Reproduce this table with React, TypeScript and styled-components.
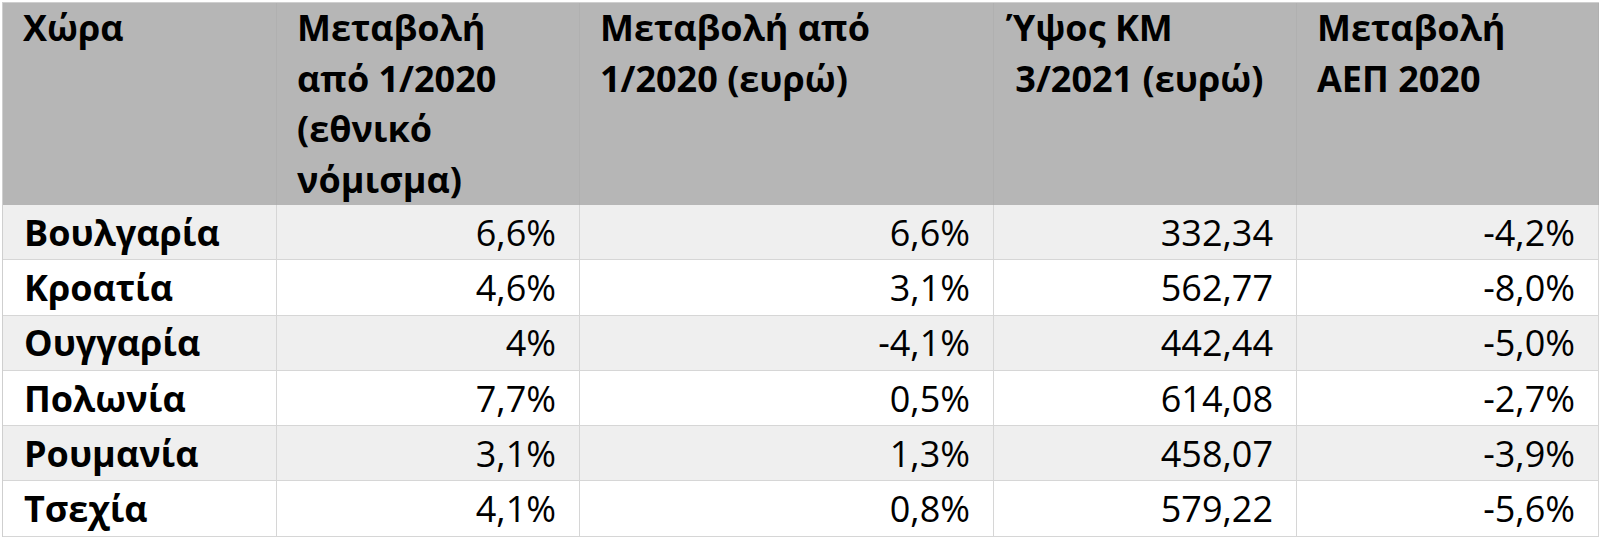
import React from "react"
import styled, { createGlobalStyle } from "styled-components"

const GlobalStyle = createGlobalStyle`
	html, body {
		margin: 0;
		padding: 0;
		background: #ffffff;
	}
	body {
		font-family: "Open Sans", "Noto Sans", "DejaVu Sans", sans-serif;
		color: #000000;
	}
`

type Row = {
	country: string
	national: string
	euro: string
	wage: string
	gdp: string
}

const rows: Row[] = [
	{ country: "Βουλγαρία", national: "6,6%", euro: "6,6%", wage: "332,34", gdp: "-4,2%" },
	{ country: "Κροατία", national: "4,6%", euro: "3,1%", wage: "562,77", gdp: "-8,0%" },
	{ country: "Ουγγαρία", national: "4%", euro: "-4,1%", wage: "442,44", gdp: "-5,0%" },
	{ country: "Πολωνία", national: "7,7%", euro: "0,5%", wage: "614,08", gdp: "-2,7%" },
	{ country: "Ρουμανία", national: "3,1%", euro: "1,3%", wage: "458,07", gdp: "-3,9%" },
	{ country: "Τσεχία", national: "4,1%", euro: "0,8%", wage: "579,22", gdp: "-5,6%" },
]

const Page = styled.div`
	padding: 2px 2px 0 2px;
`

const Table = styled.div`
	display: grid;
	grid-template-columns: 274px 303px 414px 303px 302px;
	grid-auto-rows: auto;
	border-top: 1px solid #cfcfcf;
	border-left: 1px solid #cfcfcf;
	width: max-content;
`

const HeadCell = styled.div<{ $indent?: number }>`
	background: #b6b6b6;
	font-weight: 700;
	font-size: 36px;
	line-height: 50.5px;
	height: 202px;
	box-sizing: border-box;
	padding: 0 0 0 ${(p) => p.$indent ?? 20}px;
	border-right: 1px solid #b0b0b0;
	white-space: nowrap;
`

const Cell = styled.div<{ $shade: boolean; $bold?: boolean }>`
	background: ${(p) => (p.$shade ? "#efefef" : "#ffffff")};
	font-size: 36px;
	font-weight: ${(p) => (p.$bold ? 700 : 400)};
	height: 55.3px;
	box-sizing: border-box;
	display: flex;
	align-items: center;
	justify-content: ${(p) => (p.$bold ? "flex-start" : "flex-end")};
	padding: 0 23px 0 21px;
	border-right: 1px solid #d6d6d6;
	border-bottom: 1px solid #d6d6d6;
`

export default function App() {
	return (
		<Page>
			<GlobalStyle />
			<Table>
				<HeadCell>Χώρα</HeadCell>
				<HeadCell>
					Μεταβολή
					<br />
					από 1/2020
					<br />
					(εθνικό
					<br />
					νόμισμα)
				</HeadCell>
				<HeadCell>
					Μεταβολή από
					<br />
					1/2020 (ευρώ)
				</HeadCell>
				<HeadCell $indent={12}>
					Ύψος ΚΜ
					<br />
					&nbsp;3/2021 (ευρώ)
				</HeadCell>
				<HeadCell>
					Μεταβολή
					<br />
					ΑΕΠ 2020
				</HeadCell>
				{rows.map((r, i) => (
					<React.Fragment key={r.country}>
						<Cell $shade={i % 2 === 0} $bold>
							{r.country}
						</Cell>
						<Cell $shade={i % 2 === 0}>{r.national}</Cell>
						<Cell $shade={i % 2 === 0}>{r.euro}</Cell>
						<Cell $shade={i % 2 === 0}>{r.wage}</Cell>
						<Cell $shade={i % 2 === 0}>{r.gdp}</Cell>
					</React.Fragment>
				))}
			</Table>
		</Page>
	)
}
